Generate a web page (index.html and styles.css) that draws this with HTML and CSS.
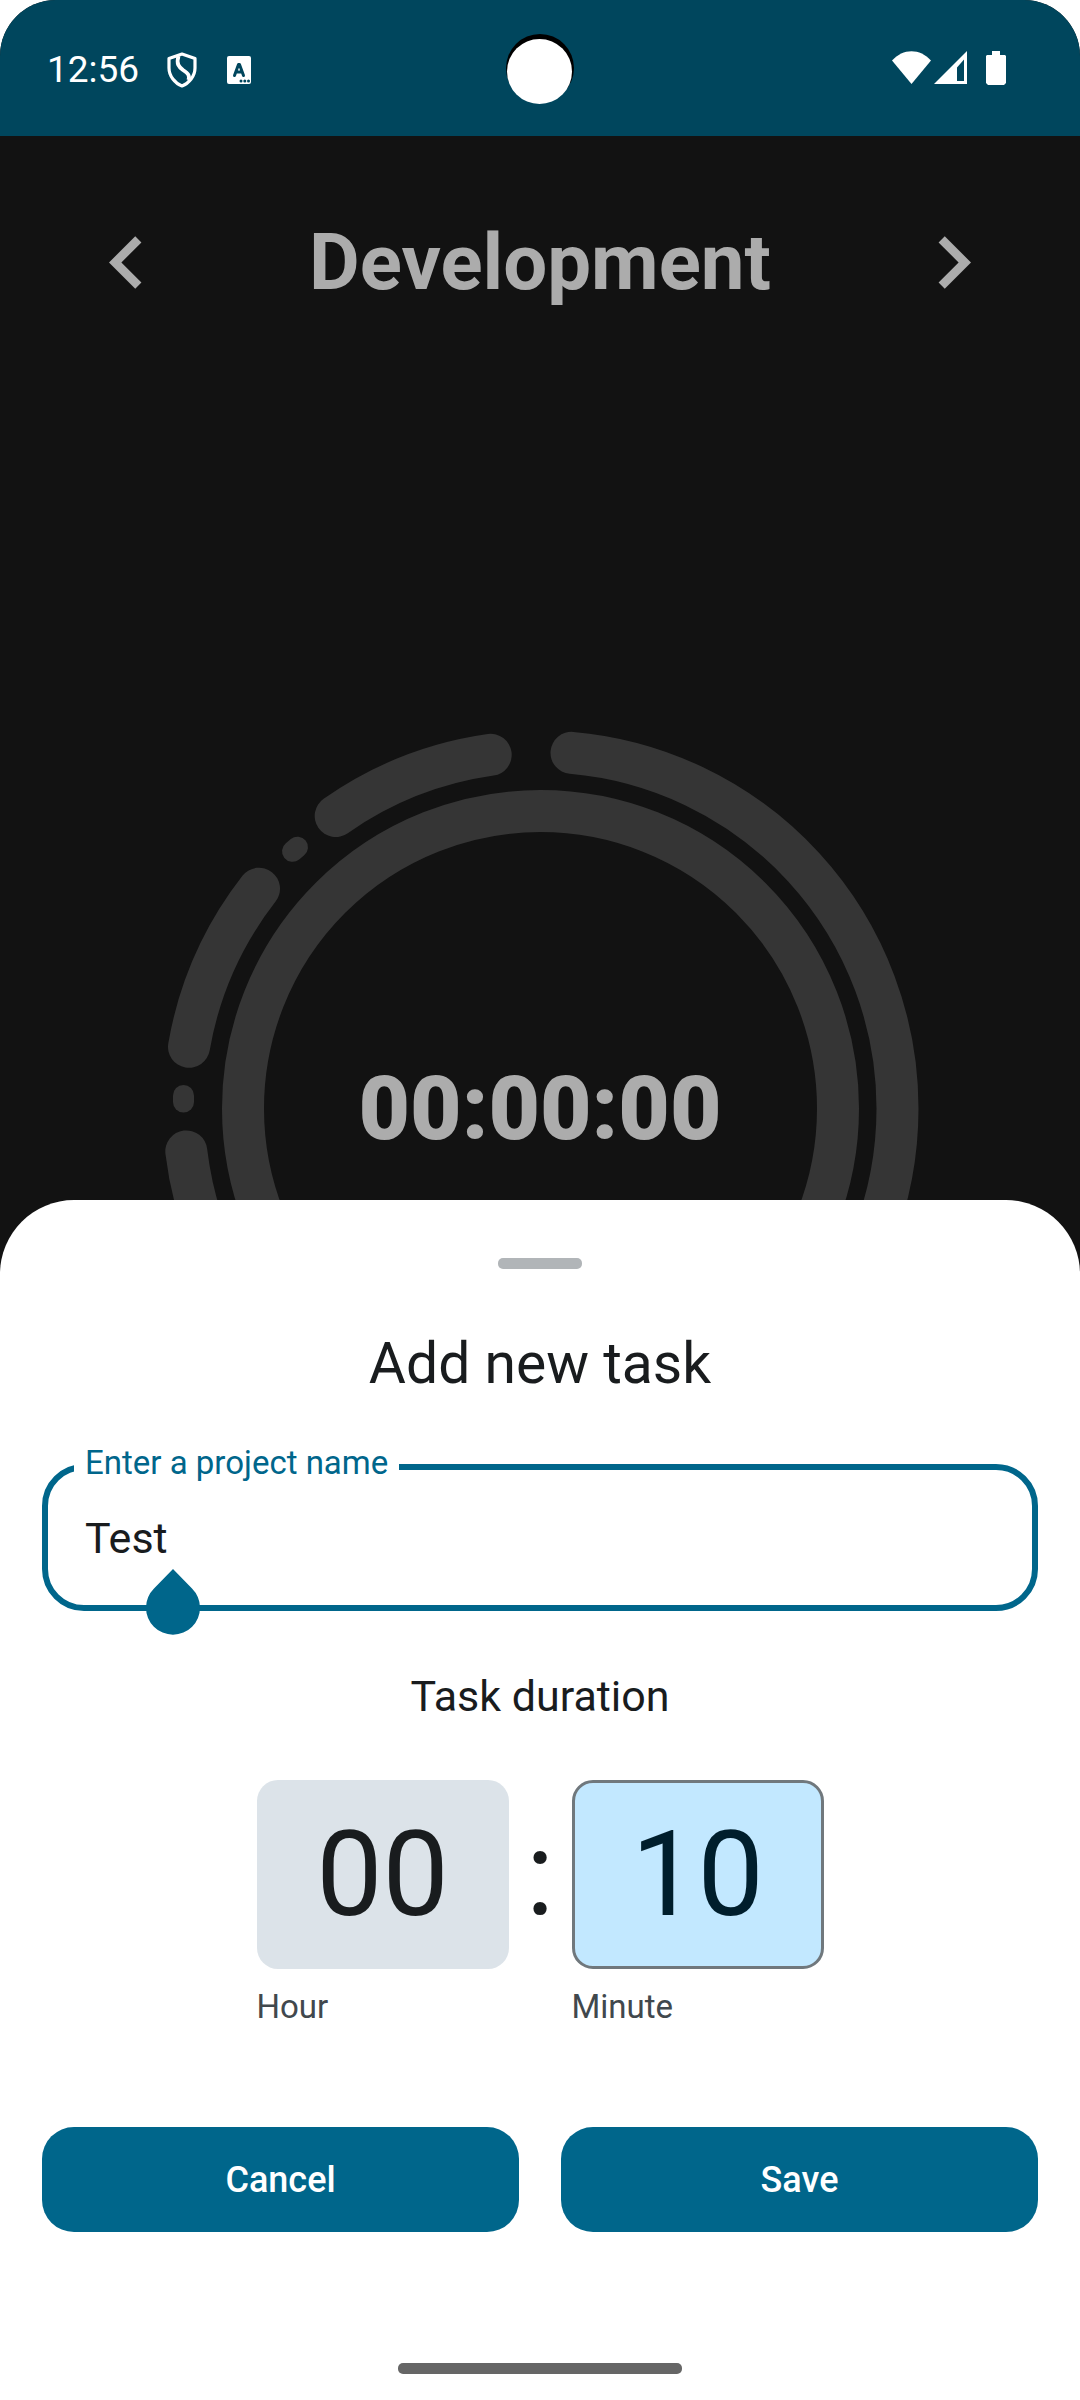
FILE: index.html
```html
<!DOCTYPE html>
<html lang="en">
<head>
<meta charset="utf-8">
<meta name="viewport" content="width=device-width, initial-scale=1">
<title>Add new task</title>
<link rel="stylesheet" href="styles.css">
</head>
<body>
<div class="app">
  <header class="status-bar">
    <div class="status-group">
      <span class="clock">12:56</span>
      <svg class="icon-shield" viewBox="0 0 30 36" aria-hidden="true">
        <path d="M15 2 L28 6.500 V16 C28 24 22 31.500 15 34 C8 31.500 2 24 2 16 V6.500 Z" fill="none" stroke="#fff" stroke-width="3.200" stroke-linejoin="round"/>
        <path d="M11.500 4 C9 12 12 15 16 18 C21 21.500 23 23 21.500 28" fill="none" stroke="#fff" stroke-width="3.800"/>
      </svg>
      <svg class="icon-badge" viewBox="0 0 24 28" aria-hidden="true">
        <rect width="24" height="28" rx="2" fill="#fff"/>
        <path d="M7.500 19.500 L11.500 8.500 H12.500 L16.500 19.500 M9.500 16 H14.500" fill="none" stroke="#00465d" stroke-width="3" stroke-linecap="round" stroke-linejoin="round"/>
        <g fill="#00465d">
          <circle cx="14" cy="25" r="1.500"/>
          <circle cx="17.800" cy="25" r="1.500"/>
          <circle cx="21.500" cy="25" r="1.500"/>
        </g>
      </svg>
    </div>
    <svg class="camera" viewBox="0 0 68 70" aria-hidden="true">
      <circle cx="34" cy="34" r="34" fill="#000"/>
      <circle cx="33.500" cy="37.500" r="32.500" fill="#fff"/>
    </svg>
    <div class="status-group status-right">
      <svg class="icon-signals" viewBox="0 0 114 34" aria-hidden="true">
        <path d="M0 9.500 C11 -3 28 -3 39 9.500 L19.500 33 Z" fill="#fff"/>
        <path d="M75 0 V33 H42 Z M72 8.500 L65 16.500 V30 H72 Z" fill="#fff" fill-rule="evenodd"/>
        <path d="M100 0 h8 v4 h5 l1 1 v27 l-2 2 h-16 l-2 -2 v-27 l1 -1 h5z" fill="#fff"/>
      </svg>
    </div>
  </header>

  <main class="stage">
    <div class="project-nav">
      <button class="nav-button" type="button" aria-label="Previous project">
        <svg viewBox="0 0 24 24" aria-hidden="true"><path d="M15.410 7.410 14 6l-6 6 6 6 1.410-1.410L10.830 12z"/></svg>
      </button>
      <h1 class="project-name">Development</h1>
      <button class="nav-button" type="button" aria-label="Next project">
        <svg viewBox="0 0 24 24" aria-hidden="true"><path d="M10 6 8.590 7.410 13.170 12l-4.580 4.590L10 18l6-6z"/></svg>
      </button>
    </div>
    <div class="timer">
      <svg class="rings" viewBox="0 0 757 757" aria-hidden="true">
        <circle cx="378.500" cy="378.500" r="297.500"/>
        <path d="M409.500 22.850 A357 357 0 0 1 735.500 378.500 A357 357 0 0 1 378.500 735.500"/>
        <path d="M328.700 24.800 A357 357 0 0 0 173.700 86"/>
        <path class="dot" d="M135.500 117.200 L130.500 121.300"/>
        <path d="M97 158.700 A357 357 0 0 0 27 316.800"/>
        <path class="dot" d="M21.500 365.500 V372"/>
        <path d="M24.300 421.400 A357 357 0 0 0 250 711.500"/>
      </svg>
      <span class="time">00:00:00</span>
    </div>
  </main>

  <form class="sheet" aria-labelledby="sheet-title">
    <div class="grip"></div>
    <h2 class="sheet-title" id="sheet-title">Add new task</h2>
    <div class="field">
      <fieldset class="outline">
        <legend class="legend"><label for="project">Enter a project name</label></legend>
        <input class="text-input" id="project" type="text" value="Test">
      </fieldset>
      <svg class="cursor-handle" viewBox="0 0 54 66" aria-hidden="true">
        <path d="M27 0 L46 19.500 A27 27 0 1 1 8 19.500 Z"/>
      </svg>
    </div>
    <h3 class="section-title">Task duration</h3>
    <div class="duration">
      <input class="digits" id="hour" type="text" inputmode="numeric" value="00">
      <span class="colon">:</span>
      <input class="digits digits-active" id="minute" type="text" inputmode="numeric" value="10">
      <label class="unit" for="hour">Hour</label>
      <label class="unit unit-minute" for="minute">Minute</label>
    </div>
    <div class="actions">
      <button class="action" type="button">Cancel</button>
      <button class="action" type="submit">Save</button>
    </div>
    <div class="home-bar"></div>
  </form>
</div>
</body>
</html>
```
FILE: styles.css
```css
* {
  box-sizing: border-box;
}

body {
  margin: 0;
  background: #fff;
  font-family: Roboto, "Liberation Sans", sans-serif;
  color: #191c1e;
}

h1, h2, h3 {
  margin: 0;
  font-weight: 400;
}

input, button {
  font-family: inherit;
}

.app {
  display: grid;
  grid-template-columns: minmax(0, 1fr);
  grid-template-rows: auto 1fr;
  min-height: 100vh;
  border-radius: 56px 56px 0 0;
  overflow: hidden;
  background: #121212;
}

/* Status bar */
.status-bar {
  display: grid;
  grid-template-columns: 1fr auto 1fr;
  align-items: center;
  height: 136px;
  padding: 4px 74px 0 47px;
  background: #00465d;
  color: #fff;
  position: relative;
}

.status-group {
  display: flex;
  align-items: center;
}

.status-right {
  grid-column: 3;
  justify-content: flex-end;
  padding-bottom: 4px;
}

.clock {
  margin-right: 28px;
  font-size: 37px;
  line-height: 44px;
}

.icon-shield {
  width: 30px;
  height: 36px;
  margin-right: 30px;
}

.icon-badge {
  width: 24px;
  height: 28px;
}

.icon-signals {
  width: 114px;
  height: 34px;
}

.camera {
  position: absolute;
  left: calc(50% - 34px);
  top: 34px;
  width: 68px;
  height: 70px;
}

/* Timer screen behind the sheet */
.stage {
  grid-area: 2 / 1;
  padding-top: 74px;
  color: #acacac;
}

.project-nav {
  display: flex;
  align-items: center;
  justify-content: space-between;
  padding: 0 74px;
}

.nav-button {
  width: 105px;
  height: 105px;
  padding: 0;
  border: 0;
  background: none;
}

.nav-button svg {
  display: block;
  fill: #acacac;
}

.project-name {
  font-size: 78px;
  line-height: 92px;
  font-weight: 700;
}

.timer {
  display: grid;
  place-items: center;
  margin-top: 415px;
}

.rings {
  grid-area: 1 / 1;
  width: 757px;
  fill: none;
  stroke: #353535;
  stroke-width: 42px;
  stroke-linecap: round;
}

.rings .dot {
  stroke-width: 21px;
}

.time {
  grid-area: 1 / 1;
  font-size: 89px;
  line-height: 106px;
  font-weight: 900;
}

/* Bottom sheet */
.sheet {
  grid-area: 2 / 1;
  align-self: end;
  z-index: 1;
  display: flex;
  flex-direction: column;
  padding: 58px 42px 26px;
  border-radius: 74px 74px 0 0;
  background: #fff;
}

.grip {
  align-self: center;
  width: 84px;
  height: 11px;
  border-radius: 5px;
  background: #b1b5b8;
}

.sheet-title {
  margin-top: 61px;
  font-size: 57px;
  line-height: 68px;
  text-align: center;
}

.field {
  position: relative;
  margin-top: 46px;
}

.outline {
  margin: 0;
  padding: 23px 37px 42px;
  border: 6px solid #00668b;
  border-radius: 42px;
}

.legend {
  margin-left: -11px;
  padding: 0 11px 8px;
  font-size: 33px;
  line-height: 38px;
  color: #00668b;
}

.text-input {
  display: block;
  width: 100%;
  height: 50px;
  padding: 0;
  border: 0;
  outline: 0;
  background: none;
  font-size: 43px;
  line-height: 50px;
  color: #191c1e;
}

.cursor-handle {
  position: absolute;
  left: 104px;
  top: 125px;
  width: 54px;
  height: 66px;
  fill: #00668b;
}

.section-title {
  margin-top: 60px;
  font-size: 43px;
  line-height: 50px;
  text-align: center;
}

.duration {
  display: grid;
  grid-template-columns: 252px 63px 252px;
  justify-content: center;
  row-gap: 19px;
  margin-top: 59px;
}

.digits {
  width: 100%;
  height: 189px;
  padding: 0;
  border: 0;
  border-radius: 21px;
  outline: 0;
  background: #dce3e9;
  font-size: 118px;
  text-align: center;
  color: #191c1e;
}

.digits-active {
  border: 3px solid #70787d;
  background: #c2e8ff;
  color: #001e2c;
}

.colon {
  font-size: 118px;
  line-height: 189px;
  text-align: center;
}

.unit {
  font-size: 33px;
  line-height: 38px;
  color: #41484d;
}

.unit-minute {
  grid-column: 3;
}

.actions {
  display: grid;
  grid-template-columns: 1fr 1fr;
  gap: 42px;
  margin-top: 101px;
}

.action {
  height: 105px;
  border: 0;
  border-radius: 32px;
  background: #00668b;
  font-size: 36px;
  font-weight: 500;
  color: #fff;
}

.home-bar {
  align-self: center;
  width: 284px;
  height: 11px;
  margin-top: 131px;
  border-radius: 5px;
  background: #666;
}
```
